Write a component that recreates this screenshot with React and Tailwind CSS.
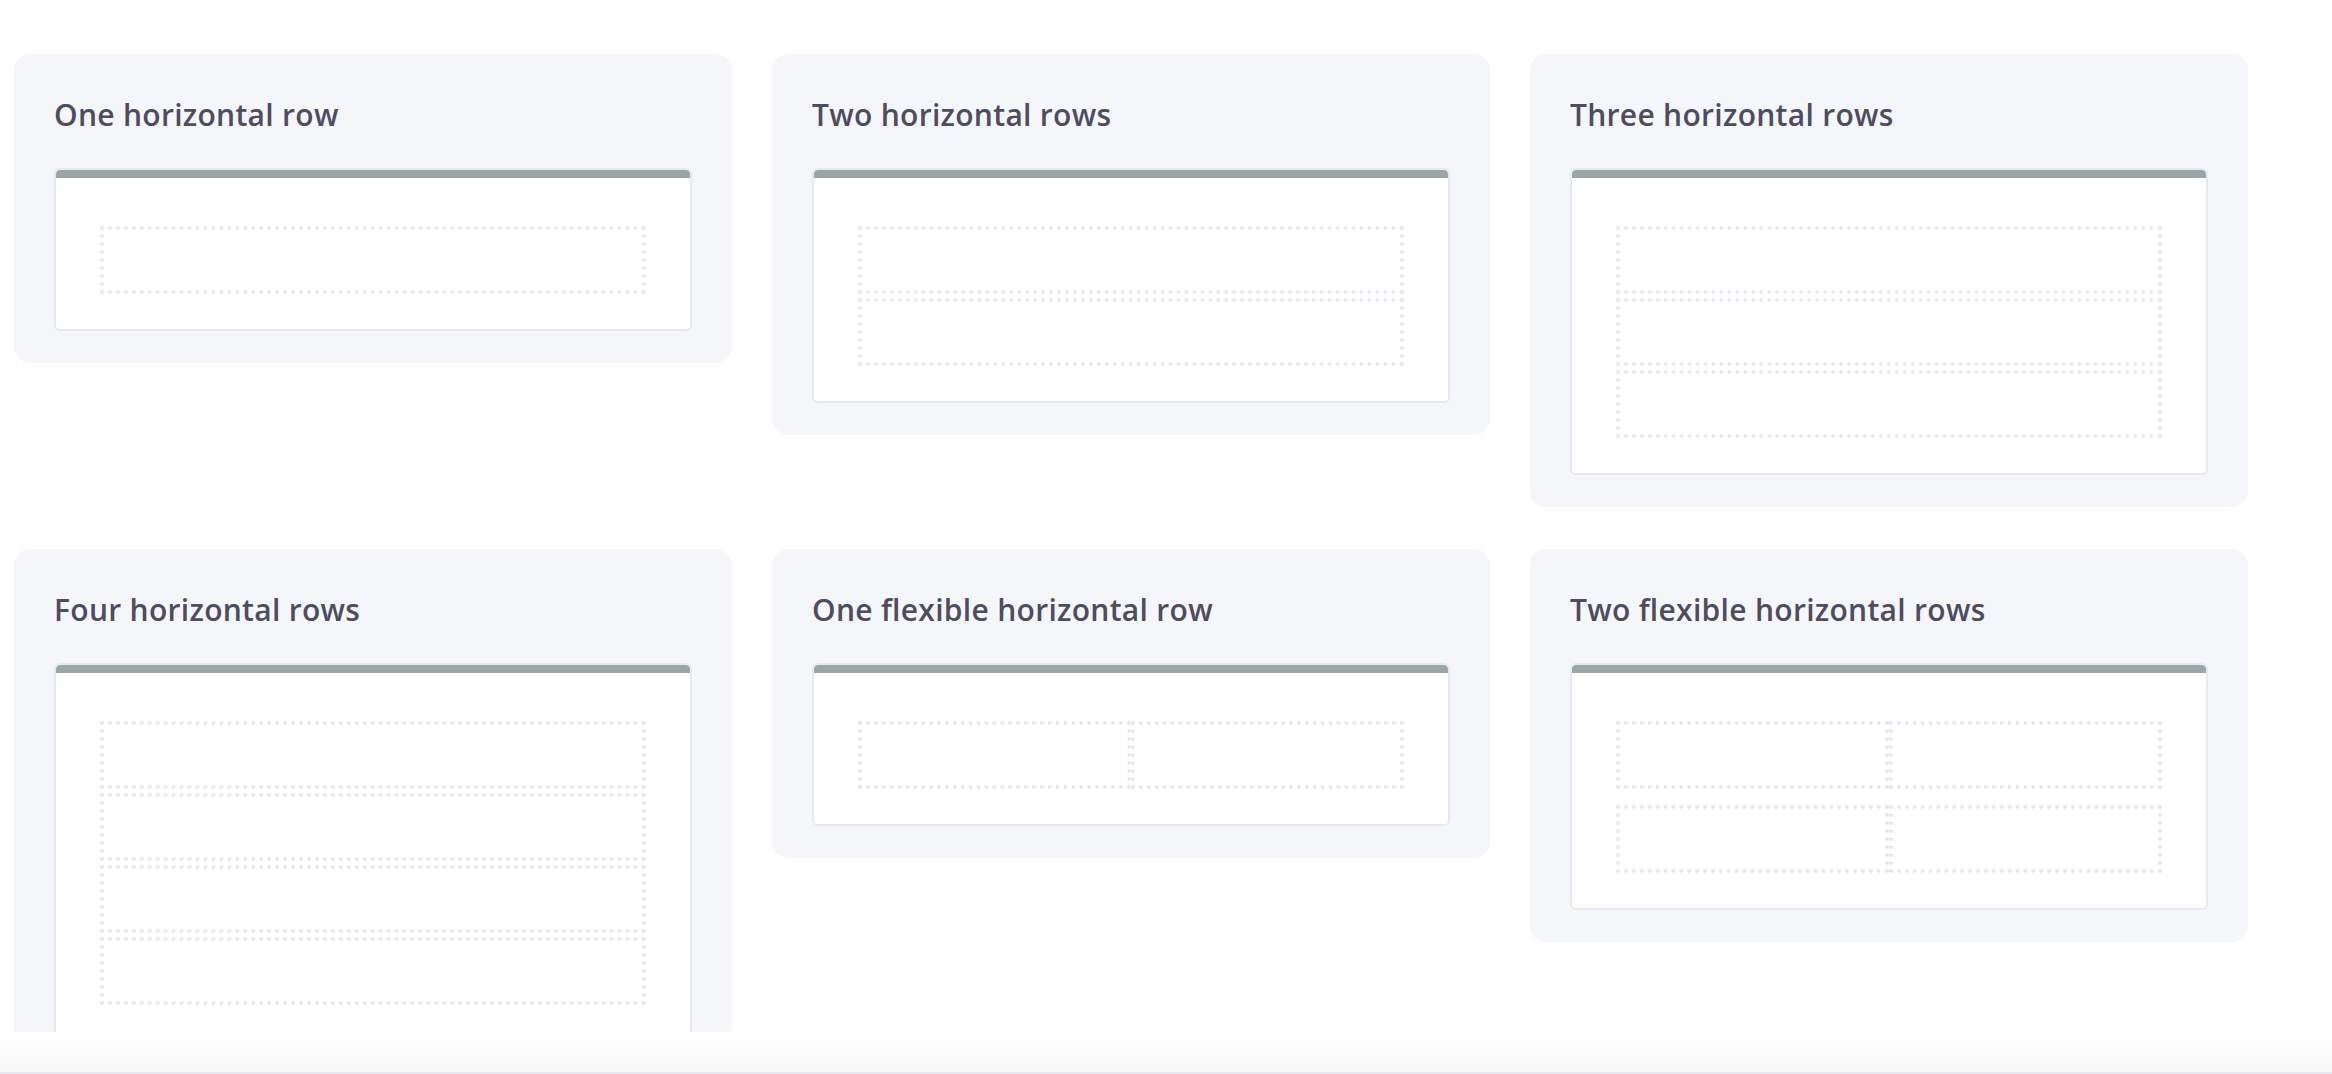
import React from 'react'

const layouts = [
  { title: 'One horizontal row', rows: 1, flexible: false },
  { title: 'Two horizontal rows', rows: 2, flexible: false },
  { title: 'Three horizontal rows', rows: 3, flexible: false },
  { title: 'Four horizontal rows', rows: 4, flexible: false },
  { title: 'One flexible horizontal row', rows: 1, flexible: true },
  { title: 'Two flexible horizontal rows', rows: 2, flexible: true },
]

const Cell = () => (
  <div className="flex-1 h-[68px] border-4 border-dotted border-[#e5e9f2]" />
)

const LayoutCard = ({ title, rows, flexible }) => {
  return (
    <div className="bg-[#f5f6fa] rounded-2xl px-[40px] pt-[40px] pb-[32px]">
      <h3 className="text-[30px] leading-[42px] font-semibold tracking-[0.3px] text-[#4d4c60] mb-[32px] font-['Open_Sans',sans-serif]">
        {title}
      </h3>
      {/* preview window */}
      <div className="bg-white border-2 border-[#e6e9f2] rounded-md overflow-hidden">
        <div className="h-2 bg-[#9aa5a5] rounded-t-sm" />
        <div className={`px-[44px] pt-[48px] pb-[35px] flex flex-col ${flexible ? 'gap-4' : 'gap-1'}`}>
          {Array.from({ length: rows }).map((_, i) => (
            <div key={i} className="flex">
              <Cell />
              {flexible && <Cell />}
            </div>
          ))}
        </div>
      </div>
    </div>
  )
}

export default function App() {
  return (
    <div className="w-[2332px] h-[1074px] bg-white overflow-hidden flex flex-col">
      <div className="h-[1032px] overflow-hidden pl-[14px] pt-[54px]">
        <div className="grid grid-cols-[repeat(3,718px)] gap-x-[40px] gap-y-[42px] items-start">
          {layouts.map((l) => (
            <LayoutCard key={l.title} {...l} />
          ))}
        </div>
      </div>
      <div className="flex-1 bg-gradient-to-b from-white to-[#f7f7f9] border-b-2 border-[#e6e6ec]" />
    </div>
  )
}
